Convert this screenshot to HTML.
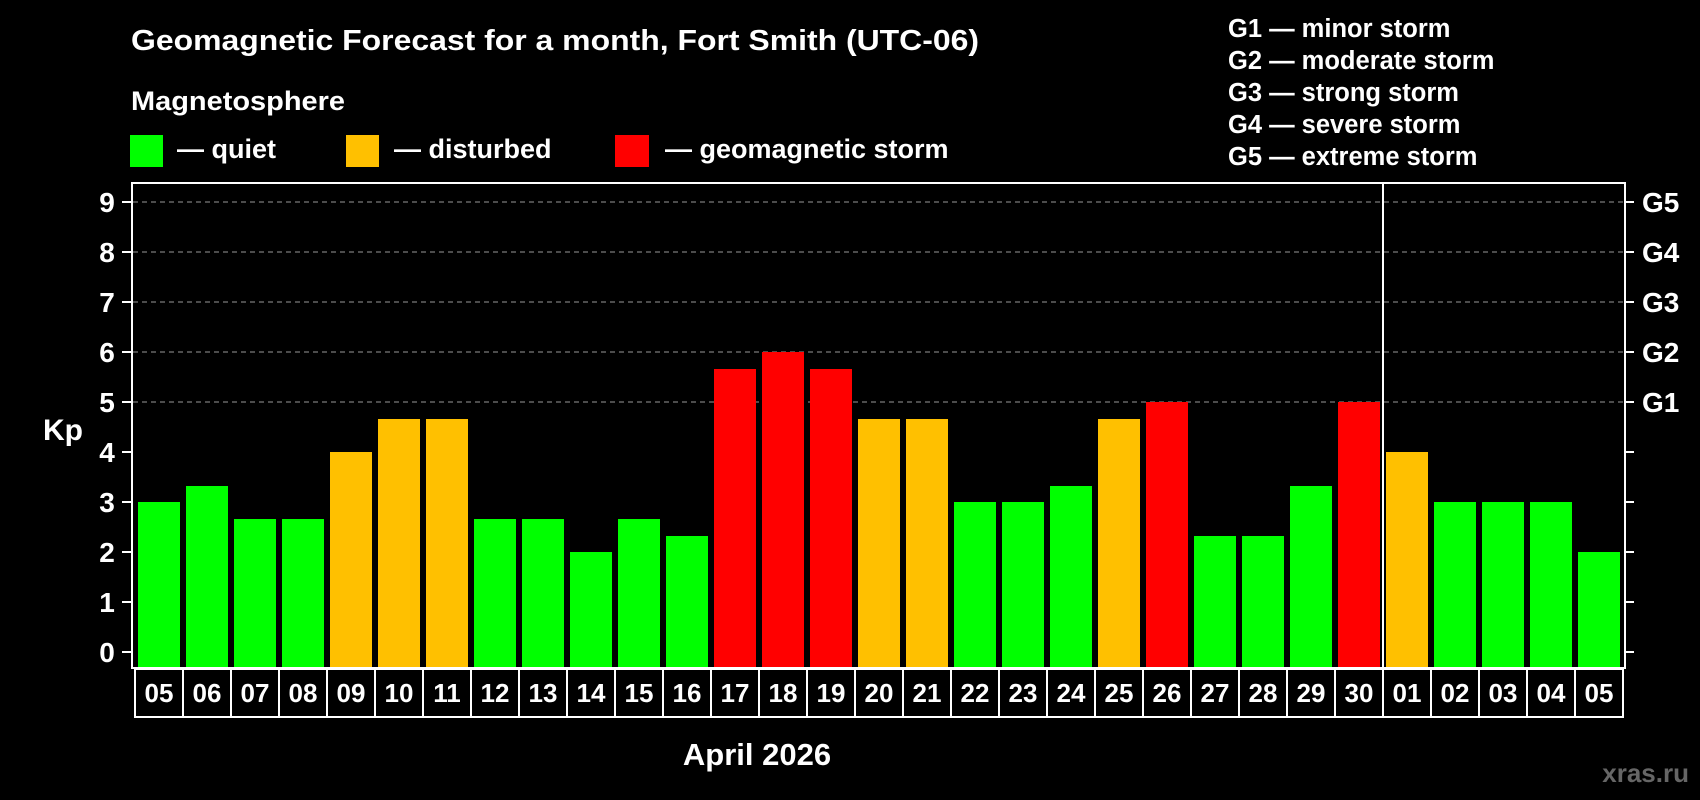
<!DOCTYPE html>
<html><head><meta charset="utf-8"><style>
html,body{margin:0;padding:0;background:#000;}
svg{display:block}
.n{font-family:"Liberation Sans Narrow","Liberation Sans",sans-serif;font-weight:bold;fill:#fff}
.w{font-family:"Liberation Sans",sans-serif;font-weight:bold;fill:#fff}
</style></head><body>
<svg width="1700" height="800" viewBox="0 0 1700 800" xmlns="http://www.w3.org/2000/svg">
<rect width="1700" height="800" fill="#000"/>
<text class="n" x="131" y="50" font-size="29" textLength="848" lengthAdjust="spacingAndGlyphs">Geomagnetic Forecast for a month, Fort Smith (UTC-06)</text>
<text class="n" x="131" y="110" font-size="27" textLength="214" lengthAdjust="spacingAndGlyphs">Magnetosphere</text>
<rect x="130" y="135" width="33" height="32" fill="#00ff00"/>
<text class="n" x="177" y="158" font-size="27">— quiet</text>
<rect x="346" y="135" width="33" height="32" fill="#ffc000"/>
<text class="n" x="394" y="158" font-size="27">— disturbed</text>
<rect x="615" y="135" width="34" height="32" fill="#ff0000"/>
<text class="n" x="665" y="158" font-size="27">— geomagnetic storm</text>
<g class="w" font-size="25.5">
<text x="1228" y="37">G1 — minor storm</text>
<text x="1228" y="69">G2 — moderate storm</text>
<text x="1228" y="101">G3 — strong storm</text>
<text x="1228" y="133">G4 — severe storm</text>
<text x="1228" y="165">G5 — extreme storm</text>
</g>
<g stroke="#999" stroke-width="1" stroke-dasharray="5,4">
<line x1="133" y1="202" x2="1624" y2="202"/>
<line x1="133" y1="252" x2="1624" y2="252"/>
<line x1="133" y1="302" x2="1624" y2="302"/>
<line x1="133" y1="352" x2="1624" y2="352"/>
<line x1="133" y1="402" x2="1624" y2="402"/>
</g>
<g id="bars"></g>
<rect x="132" y="183" width="1493" height="485" fill="none" stroke="#fff" stroke-width="2"/>
<line x1="1383" y1="183" x2="1383" y2="668" stroke="#fff" stroke-width="2"/>
<g id="ticks" stroke="#fff" stroke-width="2"></g>
<g class="w" font-size="28" text-anchor="middle" id="yl"></g>
<text class="w" x="63" y="440" font-size="30" text-anchor="middle">Kp</text>
<g class="w" font-size="28" id="gl">
<text x="1642" y="212">G5</text><text x="1642" y="262">G4</text><text x="1642" y="312">G3</text><text x="1642" y="362">G2</text><text x="1642" y="412">G1</text>
</g>
<g id="dates"></g>
<text class="n" x="757" y="765" font-size="31" text-anchor="middle">April 2026</text>
<text x="1689" y="782" font-family="Liberation Sans, sans-serif" font-weight="bold" font-size="26" fill="#666" text-anchor="end">xras.ru</text>
<script>
var v=[3,3.33,2.67,2.67,4,4.67,4.67,2.67,2.67,2,2.67,2.33,5.67,6,5.67,4.67,4.67,3,3,3.33,4.67,5,2.33,2.33,3.33,5,4,3,3,3,2];
var c="GGGGOOOGGGGGRRROOGGGORGGGROGGGG";
var d=["05","06","07","08","09","10","11","12","13","14","15","16","17","18","19","20","21","22","23","24","25","26","27","28","29","30","01","02","03","04","05"];
var col={G:"#00ff00",O:"#ffc000",R:"#ff0000"};
var ns="http://www.w3.org/2000/svg",b=document.getElementById("bars"),t=document.getElementById("ticks"),yl=document.getElementById("yl"),ds=document.getElementById("dates");
function el(n,a,p,tx){var e=document.createElementNS(ns,n);for(var k in a)e.setAttribute(k,a[k]);if(tx)e.textContent=tx;p.appendChild(e);return e;}
for(var i=0;i<31;i++){var bx=138+i*48,by=Math.round(652-50*v[i]);
el("rect",{x:bx,y:by,width:42,height:668-by,fill:col[c[i]]},b);
el("rect",{x:135+i*48,y:669,width:48,height:48,fill:"none",stroke:"#fff","stroke-width":2},ds);
el("text",{x:159+i*48,y:702,"class":"n","font-size":26,"text-anchor":"middle"},ds,d[i]);}
for(var k=0;k<=9;k++){var yy=652-50*k;el("line",{x1:122,y1:yy,x2:131,y2:yy},t);el("line",{x1:1625,y1:yy,x2:1634,y2:yy},t);
el("text",{x:107,y:yy+10},yl,String(k));}
</script>
</svg>
</body></html>
